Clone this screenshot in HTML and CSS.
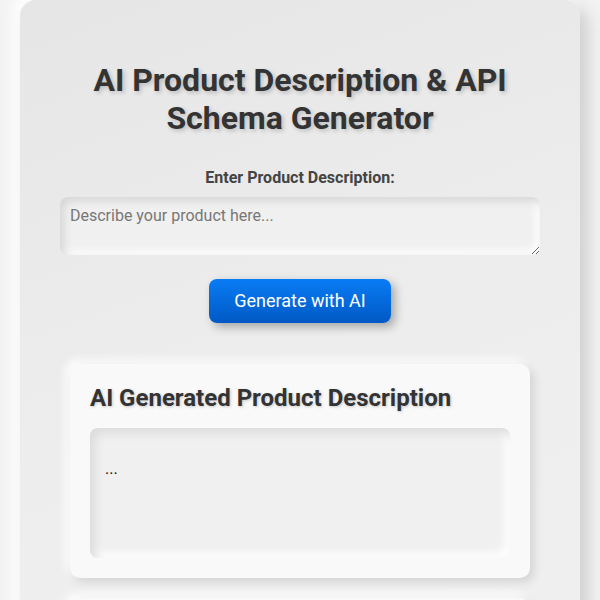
FILE: index.html
```html
<!DOCTYPE html>
<html lang="en">
<head>
<meta charset="utf-8">
<title>AI Product Description &amp; API Schema Generator</title>
<link rel="stylesheet" href="styles.css">
</head>
<body>
<div class="container">
  <h1 class="title">AI Product Description &amp; API Schema Generator</h1>
  <label class="label" for="desc">Enter Product Description:</label>
  <textarea id="desc" class="input" rows="2" placeholder="Describe your product here..."></textarea>
  <div class="actions">
    <button class="btn" type="button">Generate with AI</button>
  </div>
  <section class="card">
    <h2 class="card-title">AI Generated Product Description</h2>
    <div class="output"><p class="output-text">...</p></div>
  </section>
  <section class="card">
    <h2 class="card-title">Generated API Schema</h2>
    <div class="output"><p class="output-text">...</p></div>
  </section>
</div>
</body>
</html>
```
FILE: styles.css
```css
html, body {
  margin: 0;
  padding: 0;
}
body {
  background: #f2f2f2;
  font-family: Roboto, "Liberation Sans", Arial, sans-serif;
  color: #333;
}
.container {
  margin: 0 20px;
  padding: 40px;
  border-radius: 16px;
  background: linear-gradient(160deg, #e6e6e6 0%, #eeeeee 50%, #f1f1f1 100%);
  box-shadow: 8px 8px 16px #cfcfcf, -8px -8px 16px #ffffff;
  display: flex;
  flex-direction: column;
}
.title {
  margin: 22px 0 31px;
  font-size: 32px;
  font-weight: 700;
  line-height: 37.5px;
  text-align: center;
  color: #333;
  text-shadow: 2px 2px 4px rgba(0, 0, 0, 0.2);
}
.label {
  display: block;
  text-align: center;
  font-size: 16px;
  font-weight: 700;
  color: #444;
  margin-bottom: 10px;
}
.input {
  box-sizing: border-box;
  width: 100%;
  padding: 10px;
  border: none;
  border-radius: 8px;
  font-family: Roboto, "Liberation Sans", Arial, sans-serif;
  font-size: 16px;
  line-height: 18.75px;
  height: 58px;
  color: #333;
  background: #f0f0f0;
  box-shadow: inset 4px 4px 8px #d6d6d6, inset -4px -4px 8px #ffffff;
  outline: none;
  resize: vertical;
}
.input::placeholder {
  color: #777;
}
.actions {
  display: flex;
  justify-content: center;
  margin-top: 24px;
}
.btn {
  padding: 12px 25px;
  border: none;
  border-radius: 8px;
  font-family: Roboto, "Liberation Sans", Arial, sans-serif;
  font-size: 18px;
  line-height: 20px;
  color: #fff;
  background: linear-gradient(180deg, #0a7cf5 0%, #0059c4 100%);
  box-shadow: 4px 4px 10px rgba(0, 0, 0, 0.3);
  cursor: pointer;
}
.card {
  margin: 41px 10px 0;
  padding: 20px;
  border-radius: 10px;
  background: #f9f9f9;
  box-shadow: 4px 4px 10px #d3d3d3, -4px -4px 10px #ffffff;
}
.card + .card {
  margin-top: 20px;
}
.card-title {
  margin: 0 0 16px;
  font-size: 24px;
  font-weight: 700;
  line-height: 28px;
  color: #333;
  text-shadow: 1px 1px 3px rgba(0, 0, 0, 0.2);
}
.output {
  min-height: 100px;
  padding: 15px;
  border-radius: 8px;
  background: #f0f0f0;
  box-shadow: inset 5px 5px 10px #dcdcdc, inset -5px -5px 10px #ffffff;
}
.output-text {
  margin: 16px 0;
  font-size: 16px;
  color: #111;
}
```
